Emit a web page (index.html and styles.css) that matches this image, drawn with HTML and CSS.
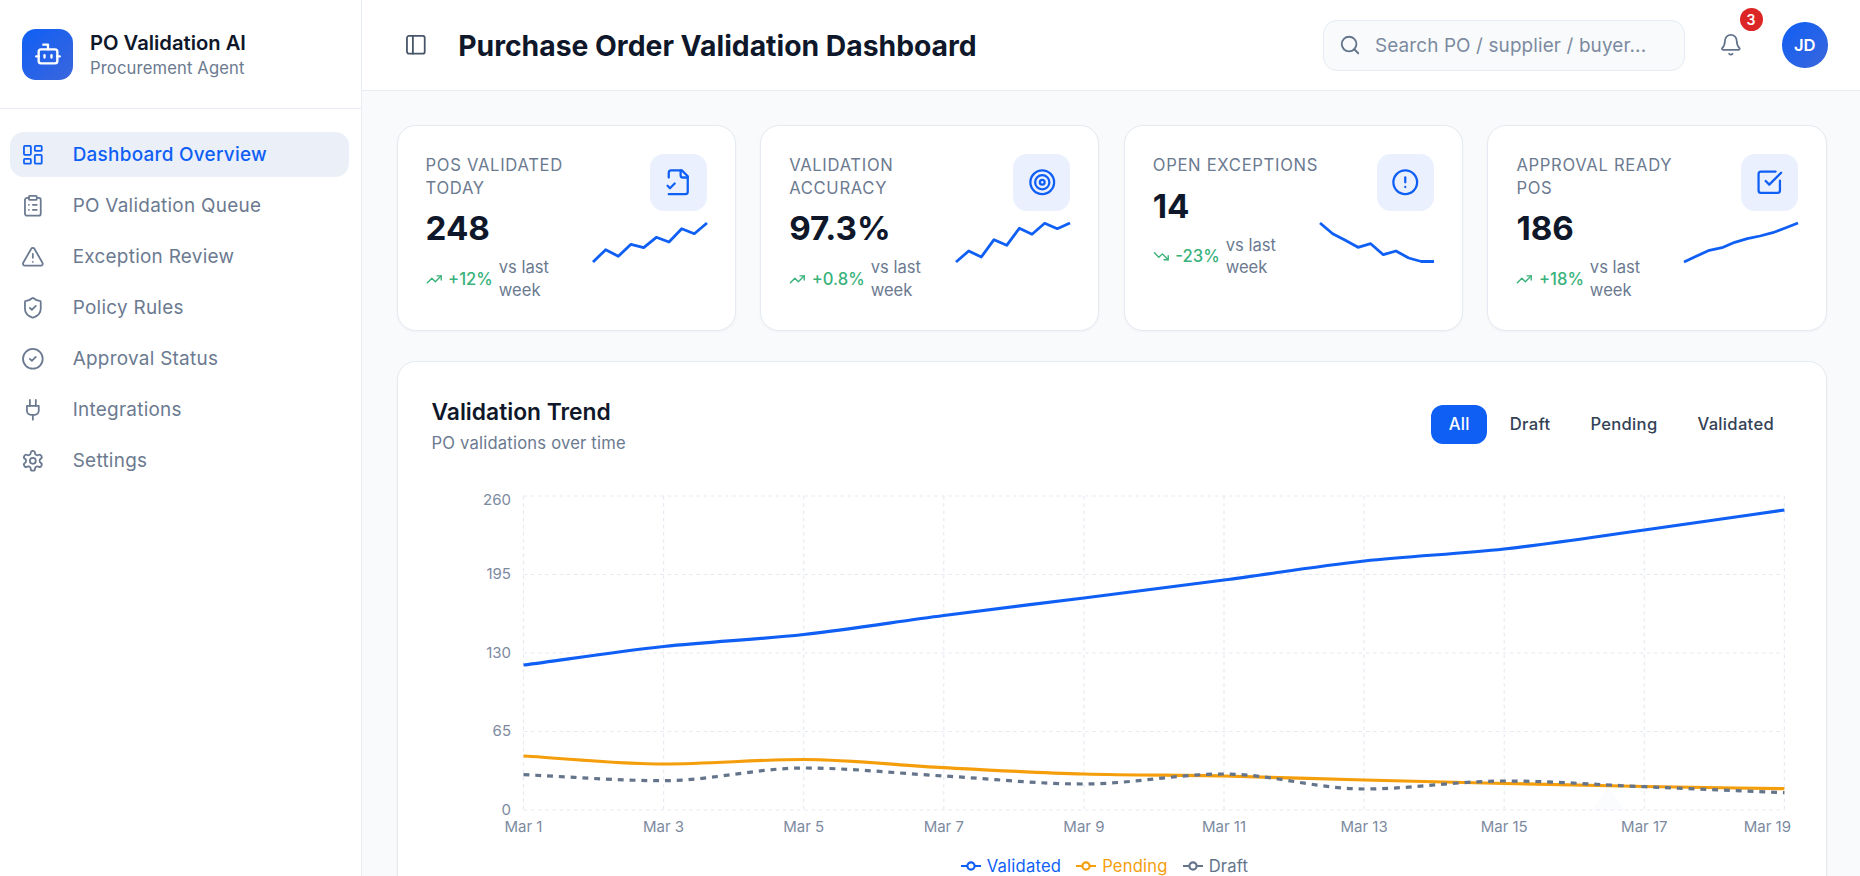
FILE: index.html
```html
<!DOCTYPE html>
<html lang="en">
<head>
<meta charset="utf-8">
<title>Purchase Order Validation Dashboard</title>
<link rel="stylesheet" href="styles.css">
</head>
<body>
<div class="app">
  <aside class="sidebar">
    <div class="brand">
      <div class="logo">
        <svg class="ico logo-ico" viewBox="0 0 24 24"><path d="M12 8V4H8"/><rect width="16" height="12" x="4" y="8" rx="2"/><path d="M2 14h2"/><path d="M20 14h2"/><path d="M15 13v2"/><path d="M9 13v2"/></svg>
      </div>
      <div class="brand-text">
        <div class="brand-name">PO Validation AI</div>
        <div class="brand-sub">Procurement Agent</div>
      </div>
    </div>
    <nav class="nav">
      <a class="nav-item active"><svg class="ico nav-ico" viewBox="0 0 24 24"><rect width="7" height="9" x="3" y="3" rx="1"/><rect width="7" height="5" x="14" y="3" rx="1"/><rect width="7" height="9" x="14" y="12" rx="1"/><rect width="7" height="5" x="3" y="16" rx="1"/></svg><span>Dashboard Overview</span></a>
      <a class="nav-item"><svg class="ico nav-ico" viewBox="0 0 24 24"><rect width="8" height="4" x="8" y="2" rx="1" ry="1"/><path d="M16 4h2a2 2 0 0 1 2 2v14a2 2 0 0 1-2 2H6a2 2 0 0 1-2-2V6a2 2 0 0 1 2-2h2"/><path d="M12 11h4"/><path d="M12 16h4"/><path d="M8 11h.01"/><path d="M8 16h.01"/></svg><span>PO Validation Queue</span></a>
      <a class="nav-item"><svg class="ico nav-ico" viewBox="0 0 24 24"><path d="m21.73 18-8-14a2 2 0 0 0-3.48 0l-8 14A2 2 0 0 0 4 21h16a2 2 0 0 0 1.73-3"/><path d="M12 9v4"/><path d="M12 17h.01"/></svg><span>Exception Review</span></a>
      <a class="nav-item"><svg class="ico nav-ico" viewBox="0 0 24 24"><path d="M20 13c0 5-3.5 7.5-7.66 8.95a1 1 0 0 1-.67-.01C7.5 20.5 4 18 4 13V6a1 1 0 0 1 1-1c2 0 4.5-1.2 6.24-2.72a1.17 1.17 0 0 1 1.52 0C14.51 3.81 17 5 19 5a1 1 0 0 1 1 1z"/><path d="m9 12 2 2 4-4"/></svg><span>Policy Rules</span></a>
      <a class="nav-item"><svg class="ico nav-ico" viewBox="0 0 24 24"><circle cx="12" cy="12" r="10"/><path d="m9 12 2 2 4-4"/></svg><span>Approval Status</span></a>
      <a class="nav-item"><svg class="ico nav-ico" viewBox="0 0 24 24"><path d="M12 22v-5"/><path d="M9 8V2"/><path d="M15 8V2"/><path d="M18 8v5a4 4 0 0 1-4 4h-4a4 4 0 0 1-4-4V8Z"/></svg><span>Integrations</span></a>
      <a class="nav-item"><svg class="ico nav-ico" viewBox="0 0 24 24"><path d="M12.22 2h-.44a2 2 0 0 0-2 2v.18a2 2 0 0 1-1 1.73l-.43.25a2 2 0 0 1-2 0l-.15-.08a2 2 0 0 0-2.73.73l-.22.38a2 2 0 0 0 .73 2.73l.15.1a2 2 0 0 1 1 1.72v.51a2 2 0 0 1-1 1.74l-.15.09a2 2 0 0 0-.73 2.73l.22.38a2 2 0 0 0 2.73.73l.15-.08a2 2 0 0 1 2 0l.43.25a2 2 0 0 1 1 1.73V20a2 2 0 0 0 2 2h.44a2 2 0 0 0 2-2v-.18a2 2 0 0 1 1-1.73l.43-.25a2 2 0 0 1 2 0l.15.08a2 2 0 0 0 2.73-.73l.22-.39a2 2 0 0 0-.73-2.73l-.15-.08a2 2 0 0 1-1-1.74v-.5a2 2 0 0 1 1-1.74l.15-.09a2 2 0 0 0 .73-2.73l-.22-.38a2 2 0 0 0-2.73-.73l-.15.08a2 2 0 0 1-2 0l-.43-.25a2 2 0 0 1-1-1.73V4a2 2 0 0 0-2-2z"/><circle cx="12" cy="12" r="3"/></svg><span>Settings</span></a>
    </nav>
  </aside>

  <div class="main">
    <header class="topbar">
      <svg class="ico toggle-ico" viewBox="0 0 24 24"><rect width="18" height="18" x="3" y="3" rx="2"/><path d="M9 3v18"/></svg>
      <h1 class="page-title">Purchase Order Validation Dashboard</h1>
      <div class="search">
        <svg class="ico search-ico" viewBox="0 0 24 24"><path d="m21 21-4.34-4.34"/><circle cx="11" cy="11" r="8"/></svg>
        <span class="search-text">Search PO / supplier / buyer...</span>
      </div>
      <div class="bell">
        <svg class="ico bell-ico" viewBox="0 0 24 24"><path d="M10.268 21a2 2 0 0 0 3.464 0"/><path d="M3.262 15.326A1 1 0 0 0 4 17h16a1 1 0 0 0 .74-1.673C19.41 13.956 18 12.499 18 8A6 6 0 0 0 6 8c0 4.499-1.411 5.956-2.738 7.326"/></svg>
        <span class="badge">3</span>
      </div>
      <div class="avatar">JD</div>
    </header>

    <main class="content">
      <section class="stats">
        <article class="card stat">
          <div class="stat-left">
            <div class="stat-label">POS VALIDATED TODAY</div>
            <div class="stat-value">248</div>
            <div class="stat-trend">
              <svg class="ico trend-ico" viewBox="0 0 24 24"><path d="M16 7h6v6"/><path d="m22 7-8.5 8.5-5-5L2 17"/></svg>
              <span class="trend-num">+12%</span><span class="trend-note">vs last week</span>
            </div>
          </div>
          <div class="stat-right">
            <div class="stat-icon"><svg class="ico big-ico" viewBox="0 0 24 24"><path d="M4 22h14a2 2 0 0 0 2-2V7l-5-5H6a2 2 0 0 0-2 2v4"/><path d="M14 2v4a2 2 0 0 0 2 2h4"/><path d="m3 15 2 2 4-4"/></svg></div>
            <svg class="spark" viewBox="0 0 114 39"><polyline points="0,39 12.7,26.7 25.3,33.3 38,21.3 50.7,24.7 63.3,14.3 76,19 88.7,5.7 101.3,10.7 114,0"/></svg>
          </div>
        </article>
        <article class="card stat">
          <div class="stat-left">
            <div class="stat-label">VALIDATION ACCURACY</div>
            <div class="stat-value">97.3%</div>
            <div class="stat-trend">
              <svg class="ico trend-ico" viewBox="0 0 24 24"><path d="M16 7h6v6"/><path d="m22 7-8.5 8.5-5-5L2 17"/></svg>
              <span class="trend-num">+0.8%</span><span class="trend-note">vs last week</span>
            </div>
          </div>
          <div class="stat-right">
            <div class="stat-icon"><svg class="ico big-ico" viewBox="0 0 24 24"><circle cx="12" cy="12" r="10"/><circle cx="12" cy="12" r="6"/><circle cx="12" cy="12" r="2"/></svg></div>
            <svg class="spark" viewBox="0 0 114 39"><polyline points="0,39 12.7,28 25.3,34 38,16.7 50.7,22.3 63.3,5.3 76,11.3 88.7,0.3 101.3,5.7 114,0"/></svg>
          </div>
        </article>
        <article class="card stat">
          <div class="stat-left">
            <div class="stat-label">OPEN EXCEPTIONS</div>
            <div class="stat-value">14</div>
            <div class="stat-trend">
              <svg class="ico trend-ico" viewBox="0 0 24 24"><path d="M16 17h6v-6"/><path d="m22 17-8.5-8.5-5 5L2 7"/></svg>
              <span class="trend-num">-23%</span><span class="trend-note">vs last week</span>
            </div>
          </div>
          <div class="stat-right">
            <div class="stat-icon"><svg class="ico big-ico" viewBox="0 0 24 24"><circle cx="12" cy="12" r="10"/><path d="M12 8v4"/><path d="M12 16h.01"/></svg></div>
            <svg class="spark" viewBox="0 0 114 39"><polyline points="0,0 12.7,10.7 25.3,17.3 38,24.3 50.7,20.7 63.3,31.7 76,28 88.7,35 101.3,38.5 114,38.5"/></svg>
          </div>
        </article>
        <article class="card stat">
          <div class="stat-left">
            <div class="stat-label">APPROVAL READY POS</div>
            <div class="stat-value">186</div>
            <div class="stat-trend">
              <svg class="ico trend-ico" viewBox="0 0 24 24"><path d="M16 7h6v6"/><path d="m22 7-8.5 8.5-5-5L2 17"/></svg>
              <span class="trend-num">+18%</span><span class="trend-note">vs last week</span>
            </div>
          </div>
          <div class="stat-right">
            <div class="stat-icon"><svg class="ico big-ico" viewBox="0 0 24 24"><path d="M21 10.656V19a2 2 0 0 1-2 2H5a2 2 0 0 1-2-2V5a2 2 0 0 1 2-2h12.344"/><path d="m9 11 3 3L22 4"/></svg></div>
            <svg class="spark" viewBox="0 0 114 39"><polyline points="0,39 12.7,33 25.3,27.3 38,24.7 50.7,19.3 63.3,15.7 76,13 88.7,9.7 101.3,5 114,0"/></svg>
          </div>
        </article>
      </section>

      <section class="card chart-card">
        <div class="chart-head">
          <div>
            <h2 class="chart-title">Validation Trend</h2>
            <p class="chart-sub">PO validations over time</p>
          </div>
          <div class="tabs">
            <button class="tab tab-on">All</button>
            <button class="tab">Draft</button>
            <button class="tab">Pending</button>
            <button class="tab">Validated</button>
          </div>
        </div>
        <svg class="chart" viewBox="432 480 1360 360">
          <polygon class="ghost" points="1593,810 1608,787 1625,810"/>
          <path class="grid" d="M523.5 496H1784.4M523.5 574.5H1784.4M523.5 653H1784.4M523.5 731.5H1784.4M523.5 810H1784.4M523.5 496V810M663.6 496V810M803.7 496V810M943.8 496V810M1083.9 496V810M1224 496V810M1364.1 496V810M1504.2 496V810M1644.3 496V810M1784.4 496V810"/>
          <g class="tick tick-y">
            <text x="511" y="505">260</text>
            <text x="511" y="579">195</text>
            <text x="511" y="658">130</text>
            <text x="511" y="736">65</text>
            <text x="511" y="815">0</text>
          </g>
          <g class="tick tick-x">
            <text x="523.5" y="831.5">Mar 1</text>
            <text x="663.6" y="831.5">Mar 3</text>
            <text x="803.7" y="831.5">Mar 5</text>
            <text x="943.8" y="831.5">Mar 7</text>
            <text x="1083.9" y="831.5">Mar 9</text>
            <text x="1224" y="831.5">Mar 11</text>
            <text x="1364.1" y="831.5">Mar 13</text>
            <text x="1504.2" y="831.5">Mar 15</text>
            <text x="1644.3" y="831.5">Mar 17</text>
            <text class="tick-end" x="1791" y="831.5">Mar 19</text>
          </g>
          <path class="line line-blue" d="M523.5 665C570.2 658.8 616.9 651.6 663.6 646.5C710.3 641.4 757 639.7 803.7 634.5C850.4 629.3 897.1 621.6 943.8 615.5C990.5 609.4 1037.2 603.9 1083.9 598C1130.6 592.1 1177.3 586.2 1224 580C1270.7 573.8 1317.4 566.2 1364.1 561C1410.8 555.8 1457.5 554.2 1504.2 549C1550.9 543.8 1597.6 536.5 1644.3 530C1691 523.5 1737.7 516.7 1784.4 510"/>
          <path class="line line-orange" d="M523.5 756C570.2 758.7 616.9 764 663.6 764C710.3 764 757 759.5 803.7 759.5C850.4 759.5 897.1 765.3 943.8 767.7C990.5 770.1 1037.2 772.6 1083.9 774C1130.6 775.4 1177.3 775 1224 776C1270.7 777 1317.4 778.75 1364.1 780C1410.8 781.25 1457.5 782.4 1504.2 783.5C1550.9 784.6 1597.6 785.63 1644.3 786.5C1691 787.37 1737.7 787.97 1784.4 788.7"/>
          <path class="line line-gray" d="M523.5 774.7C570.2 776.7 616.9 780.7 663.6 780.7C710.3 780.7 757 768 803.7 768C850.4 768 897.1 773.33 943.8 776C990.5 778.67 1037.2 784 1083.9 784C1130.6 784 1177.3 774 1224 774C1270.7 774 1317.4 789 1364.1 789C1410.8 789 1457.5 781 1504.2 781C1550.9 781 1597.6 784.75 1644.3 786.7C1691 788.65 1737.7 790.7 1784.4 792.7"/>
        </svg>
        <div class="legend">
          <span class="legend-item c-blue"><svg class="legend-ico" viewBox="0 0 20 14"><path d="M0 7H6M14 7H20"/><circle cx="10" cy="7" r="3.6"/></svg>Validated</span>
          <span class="legend-item c-orange"><svg class="legend-ico" viewBox="0 0 20 14"><path d="M0 7H6M14 7H20"/><circle cx="10" cy="7" r="3.6"/></svg>Pending</span>
          <span class="legend-item c-gray"><svg class="legend-ico" viewBox="0 0 20 14"><path d="M0 7H6M14 7H20"/><circle cx="10" cy="7" r="3.6"/></svg>Draft</span>
        </div>
      </section>
    </main>
  </div>
</div>
</body>
</html>
```
FILE: styles.css
```css
* { box-sizing: border-box; }
html, body { margin: 0; height: 100%; }
body {
  font-family: Inter, "Liberation Sans", sans-serif;
  color: #0f172a;
  background: #f8fafc;
  overflow: hidden;
}
.app { display: flex; height: 100vh; overflow: hidden; }
.ico {
  fill: none;
  stroke: currentColor;
  stroke-width: 2;
  stroke-linecap: round;
  stroke-linejoin: round;
  flex: none;
  display: block;
}

/* sidebar */
.sidebar {
  width: 362px;
  flex: none;
  background: #fff;
  border-right: 1.5px solid #e8ecf3;
}
.brand {
  height: 109px;
  display: flex;
  align-items: center;
  gap: 17px;
  padding: 0 22px;
  border-bottom: 1.5px solid #e8ecf3;
}
.logo {
  width: 51px;
  height: 51px;
  border-radius: 14px;
  background: linear-gradient(135deg, #0f5ff5, #3b66dc);
  display: flex;
  align-items: center;
  justify-content: center;
  color: #fff;
}
.logo-ico { width: 28px; height: 28px; }
.brand-name { font-size: 20.2px; font-weight: 600; line-height: 26px; margin-top: 1px; }
.brand-sub { font-size: 16.6px; line-height: 24px; letter-spacing: 0.15px; color: #6b7a90; }
.nav {
  display: flex;
  flex-direction: column;
  gap: 6px;
  padding: 23px 12px 0 10px;
}
.nav-item {
  height: 45px;
  display: flex;
  align-items: center;
  gap: 28px;
  padding-left: 11px;
  border-radius: 14px;
  font-size: 18.9px;
  letter-spacing: 0.28px;
  color: #6b7a90;
}
.nav-item.active { background: #eaeff8; color: #0f5ff5; font-weight: 500; }
.nav-ico { width: 23.7px; height: 23.7px; stroke-width: 1.8; }

/* top bar */
.main { flex: 1; min-width: 0; display: flex; flex-direction: column; }
.topbar {
  height: 91px;
  flex: none;
  display: flex;
  align-items: center;
  background: #fff;
  border-bottom: 1.5px solid #e8ecf3;
  padding: 0 32.5px 0 41.5px;
}
.toggle-ico { width: 23.7px; height: 23.7px; color: #475569; stroke-width: 1.8; }
.page-title {
  margin: 1px 0 0 31px;
  font-size: 28.3px;
  font-weight: 700;
  flex: 1;
}
.search {
  width: 362px;
  height: 51px;
  display: flex;
  align-items: center;
  gap: 14px;
  padding: 0 15px;
  background: #f8fafc;
  border: 1.5px solid #e6eaf2;
  border-radius: 14px;
  color: #64748b;
}
.search-ico { width: 22px; height: 22px; }
.search-text { font-size: 18.9px; letter-spacing: 0.13px; color: #7c8aa0; }
.bell {
  position: relative;
  width: 48px;
  height: 48px;
  margin: 0 27px 0 22px;
  display: flex;
  align-items: center;
  justify-content: center;
  color: #64748b;
}
.bell-ico { width: 23.7px; height: 23.7px; stroke-width: 1.8; }
.badge {
  position: absolute;
  top: -13px;
  right: -7.5px;
  width: 23px;
  height: 23px;
  border-radius: 50%;
  background: #dc2626;
  color: #fff;
  font-size: 14px;
  font-weight: 600;
  display: flex;
  align-items: center;
  justify-content: center;
}
.avatar {
  width: 45.5px;
  height: 45.5px;
  border-radius: 50%;
  background: linear-gradient(135deg, #0f5ff5, #3b66dc);
  color: #fff;
  font-size: 16.6px;
  font-weight: 600;
  display: flex;
  align-items: center;
  justify-content: center;
}

/* content */
.content { flex: 1; min-height: 0; overflow: hidden; padding: 34px 33.5px 0 34.5px; }
.stats { display: grid; grid-template-columns: repeat(4, 1fr); gap: 24.5px; }
.card {
  background: #fff;
  border: 1.5px solid #e6eaf2;
  border-radius: 19px;
  box-shadow: 0 1px 3px rgba(15, 23, 42, 0.04);
}
.stat {
  height: 206px;
  padding: 28px;
  display: flex;
}
.stat-left { flex: 1; min-width: 0; }
.stat-label {
  font-size: 16.6px;
  font-weight: 400;
  line-height: 22.7px;
  letter-spacing: 0.7px;
  color: #6b7a90;
}
.stat-value {
  margin-top: 9px;
  font-size: 33.2px;
  font-weight: 700;
  line-height: 40px;
}
.stat-trend {
  margin-top: 8px;
  display: flex;
  align-items: center;
  font-size: 16.6px;
  line-height: 22.7px;
}
.trend-ico { width: 16.6px; height: 16.6px; color: #38b27a; margin-right: 6px; }
.trend-num { color: #38b27a; font-weight: 500; margin-right: 6px; }
.trend-note { color: #6b7a90; max-width: 62px; }
.stat-right {
  width: 114px;
  flex: none;
  display: flex;
  flex-direction: column;
  align-items: flex-end;
  gap: 12px;
}
.stat-icon {
  width: 57px;
  height: 57px;
  border-radius: 14px;
  background: #ebf0fe;
  color: #0f5ff5;
  display: flex;
  align-items: center;
  justify-content: center;
}
.big-ico { width: 28.5px; height: 28.5px; stroke-width: 1.9; }
.spark { width: 114px; height: 39px; display: block; overflow: visible; }
.spark polyline {
  fill: none;
  stroke: #0f5ff5;
  stroke-width: 2.8;
  stroke-linejoin: round;
  stroke-linecap: butt;
}

/* chart */
.chart-card { margin-top: 29.5px; padding: 33px 34px 40px 34px; }
.chart-head { display: flex; justify-content: space-between; align-items: flex-start; }
.chart-title { margin: 0 0 1px; font-size: 22.8px; font-weight: 600; line-height: 34px; }
.chart-sub { margin: 0; font-size: 16.6px; line-height: 26px; letter-spacing: 0.2px; color: #6b7a90; }
.tabs { display: flex; gap: 5px; margin-top: 10px; }
.tab {
  height: 39px;
  padding: 0 17.5px;
  border: 0;
  border-radius: 12px;
  background: transparent;
  font: 450 16.6px Inter, "Liberation Sans", sans-serif;
  letter-spacing: 0.3px;
  color: #334155;
}
.tab-on { background: #0f5ff5; color: #fff; }
.chart { display: block; width: 1360px; height: 360px; margin-top: 24px; }
.ghost { fill: #fbfcfe; }
.grid { fill: none; stroke: #e6eaf2; stroke-width: 1.2; stroke-dasharray: 3.6 3.6; }
.tick { font-family: Inter, "Liberation Sans", sans-serif; font-size: 15px; fill: #7c8aa0; }
.tick-y { text-anchor: end; }
.tick-x { text-anchor: middle; }
.tick-x .tick-end { text-anchor: end; }
.line { fill: none; stroke-width: 3.2; stroke-linecap: butt; }
.line-blue { stroke: #0f5ff5; }
.line-orange { stroke: #f59e0b; }
.line-gray { stroke: #64748b; stroke-dasharray: 5.9 5.9; }
.legend {
  display: flex;
  justify-content: center;
  gap: 15px;
  margin-top: 14px;
  padding-right: 14px;
  font-size: 16.6px;
  letter-spacing: 0.2px;
  line-height: 24px;
}
.legend-item { display: flex; align-items: center; gap: 6px; }
.legend-ico { width: 20px; height: 14px; fill: none; stroke: currentColor; stroke-width: 2.2; }
.c-blue { color: #0f5ff5; }
.c-orange { color: #f59e0b; }
.c-gray { color: #64748b; }
```
